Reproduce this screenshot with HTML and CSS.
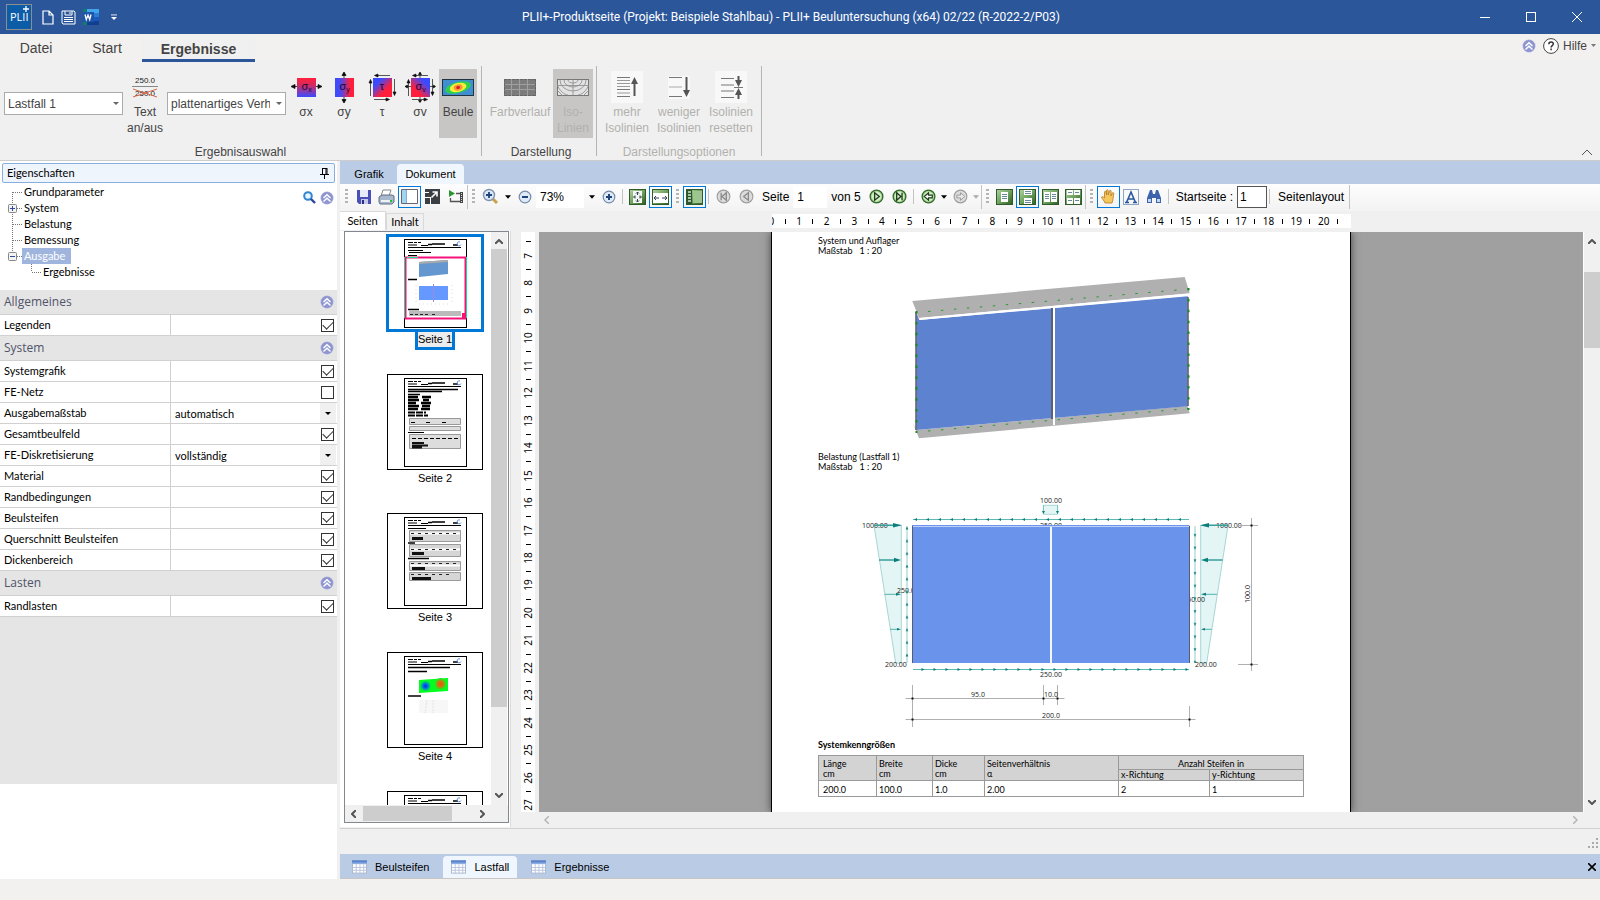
FILE: index.html
```html
<!DOCTYPE html>
<html lang="de">
<head>
<meta charset="utf-8">
<title>PLII+ Beuluntersuchung</title>
<link rel="stylesheet" href="styles.css">
</head>
<body>
<svg class="defs" aria-hidden="true">
  <defs>
    <linearGradient id="gx" x1="0" y1="0" x2="0" y2="1"><stop offset="0" stop-color="#ff1f3c"/><stop offset=".35" stop-color="#d92a5c"/><stop offset="1" stop-color="#3a4bff"/></linearGradient>
    <linearGradient id="gy" x1="0" y1="0" x2="1" y2="0"><stop offset="0" stop-color="#3a4bff"/><stop offset=".3" stop-color="#4a48ee"/><stop offset=".8" stop-color="#ff1f3c"/></linearGradient>
    <linearGradient id="gt" x1="0" y1="0" x2="1" y2="1"><stop offset=".25" stop-color="#3a4bff"/><stop offset=".65" stop-color="#ff1f3c"/></linearGradient>
    <linearGradient id="gv" x1="0" y1="1" x2="1" y2="0"><stop offset=".3" stop-color="#ff1f3c"/><stop offset=".75" stop-color="#3a4bff"/></linearGradient>
    <linearGradient id="gg" x1="0" y1="0" x2="1" y2="1"><stop offset="0" stop-color="#b5d3a4"/><stop offset=".5" stop-color="#6fa35e"/><stop offset="1" stop-color="#2c5c22"/></linearGradient>
    <linearGradient id="gb" x1="0" y1="0" x2="0" y2="1"><stop offset="0" stop-color="#3f6fc4"/><stop offset="1" stop-color="#9fbbe8"/></linearGradient>
    <radialGradient id="gc"><stop offset="0" stop-color="#8fa6dc"/><stop offset=".8" stop-color="#9290cc"/><stop offset="1" stop-color="#a5b6e2"/></radialGradient>
    <radialGradient id="hb"><stop offset="0" stop-color="#0020ff"/><stop offset=".5" stop-color="#0080d0"/><stop offset="1" stop-color="#00ff20"/></radialGradient>
    <radialGradient id="hr"><stop offset="0" stop-color="#f05010"/><stop offset=".5" stop-color="#c08010"/><stop offset="1" stop-color="#00ff20"/></radialGradient>
    <pattern id="ar" width="12" height="4" patternUnits="userSpaceOnUse" x="914" y="667"><path d="M0 2.500h12" stroke="#5fb8b3"/><path d="M8.500 1l3 1.500-3 1.500z" fill="#0b7f7c"/></pattern>
    <pattern id="al" width="12" height="4" patternUnits="userSpaceOnUse" x="914" y="517"><path d="M0 2.500h12" stroke="#5fb8b3"/><path d="M4 1L1 2.500 4 4z" fill="#0b7f7c"/></pattern>
    <pattern id="au" width="4" height="12.7" patternUnits="userSpaceOnUse" x="906" y="526"><path d="M2 0v13" stroke="#5fb8b3" stroke-width=".7"/><path d="M.6 3.500L2 .5l1.400 3z" fill="#0b7f7c"/></pattern>
    <pattern id="ad" width="4" height="12.7" patternUnits="userSpaceOnUse" x="1194" y="525"><path d="M2 0v13" stroke="#5fb8b3" stroke-width=".7"/><path d="M.6 9L2 12l1.400-3z" fill="#0b7f7c"/></pattern>
    <symbol id="chev" viewBox="0 0 14 14"><circle cx="7" cy="7" r="6.500" fill="url(#gc)"/><path d="M3.500 7L7 3.700 10.500 7M3.500 10.500L7 7.200l3.500 3.300" fill="none" stroke="#fff" stroke-width="1.300"/></symbol>
    <symbol id="down" viewBox="0 0 7 4"><path d="M0 0h7L3.500 4z" fill="currentColor"/></symbol>
    <symbol id="tab" viewBox="0 0 16 14"><rect x=".5" y=".5" width="15" height="13" fill="#fff" stroke="#a9b6cf"/><path d="M0 0h16v4H0z" fill="url(#gb)"/><path d="M1 7.500h14M1 10.500h14M4.500 4v10M8.500 4v10M12.500 4v10" stroke="#b7c4da"/></symbol>
    <symbol id="tmid" viewBox="0 0 20 16"><path d="M8.500 0v16M9 8.500h10" stroke="#777" stroke-dasharray="1 1"/></symbol>
    <symbol id="ttop" viewBox="0 0 20 16"><path d="M8.500 8v8M9 8.500h10" stroke="#777" stroke-dasharray="1 1"/></symbol>
    <symbol id="tplus" viewBox="0 0 20 16"><path d="M8.500 0v16M9 8.500h10" stroke="#777" stroke-dasharray="1 1"/><rect x="4.500" y="4.500" width="8" height="8" rx="1" fill="#f3f3f3" stroke="#888"/><path d="M6 8.500h5M8.500 6v5" stroke="#2b4ba0"/></symbol>
    <symbol id="tminus" viewBox="0 0 20 16"><path d="M8.500 0v8M9 8.500h10" stroke="#777" stroke-dasharray="1 1"/><rect x="4.500" y="4.500" width="8" height="8" rx="1" fill="#f3f3f3" stroke="#888"/><path d="M6 8.500h5" stroke="#2b4ba0"/></symbol>
    <symbol id="pg" viewBox="0 0 96 96"><rect x="17.500" y="4.500" width="62" height="88" fill="#fff" stroke="#000"/><path d="M21 7.500h13" stroke="#000" stroke-dasharray="5 1 3 1"/><path d="M21 10h9M34 10.500h7M21 12.500h53" stroke="#000"/><path d="M41 9.500h4M45 9h13M66 10h5" stroke="#000" stroke-width="1.500"/><path d="M76 10.500a2 2 0 1 1-1-2.500" transform="translate(-2 -1)" fill="none" stroke="#5b8fe0"/></symbol>
    <symbol id="ring" viewBox="0 0 16 16"><circle cx="8" cy="8" r="6.800" fill="#a8d596" stroke="#31692a" stroke-width="1.400"/><circle cx="8" cy="8" r="5" fill="#d5efcb"/></symbol>
    <symbol id="gring" viewBox="0 0 16 16"><circle cx="8" cy="8" r="6.800" fill="#dcdcdc" stroke="#9d9d9d" stroke-width="1.200"/></symbol>
    <symbol id="gsq" viewBox="0 0 17 16"><rect x=".5" y=".5" width="16" height="15" fill="url(#gg)" stroke="#2f5a29"/></symbol>
  </defs>
</svg>

<header class="titlebar">
  <div class="quick">
    <svg width="26" height="26" viewBox="0 0 26 26"><rect x=".5" y=".5" width="25" height="25" fill="#0c5ca8" stroke="#8a8f90"/><text x="4" y="17" class="logo-text">PLII</text><path d="M20 2v6M17 5h6" stroke="#fff" stroke-width="1.300"/></svg>
    <button aria-label="Neu"><svg width="12" height="15" viewBox="0 0 12 15"><path d="M1 1h6l4 4v9H1zM7 1v4h4" fill="none" stroke="#fff" stroke-width="1.200"/></svg></button>
    <button aria-label="Speichern"><svg width="15" height="15" viewBox="0 0 15 15"><path d="M1 1h12l1 1v12H2l-1-1zM4 1v4h7V1M9 2v2M3 7.500h9M3 9.500h9M3 11.500h9" fill="none" stroke="#fff"/></svg></button>
    <button aria-label="Word"><svg width="16" height="16" viewBox="0 0 16 16"><path d="M4 0h12v4H4z" fill="#41a5ee"/><path d="M0 0h4v4H0z" fill="#127c6c"/><path d="M4 4h12v4H4z" fill="#2b7cd3"/><path d="M4 8h12v4H4z" fill="#185abd"/><path d="M4 12h12v4H4z" fill="#103f91"/><path d="M0 12h4v4H0z" fill="#127c6c"/><path d="M0 3h11v10H0z" fill="#1d55ad"/><path d="M2 5.500l1.300 5L5 6l1.700 4.500 1.300-5" fill="none" stroke="#fff" stroke-width="1.300"/></svg></button>
    <button aria-label="Anpassen"><svg width="6" height="7" viewBox="0 0 7 7"><path d="M0 .5h7" stroke="#fff"/><path d="M0 3h7L3.500 6.500z" fill="#fff"/></svg></button>
  </div>
  <h1>PLII+-Produktseite (Projekt: Beispiele Stahlbau) - PLII+ Beuluntersuchung (x64) 02/22 (R-2022-2/P03)</h1>
  <div class="window-buttons">
    <button aria-label="Minimieren"><svg width="10" height="10"><path d="M0 5.500h10" stroke="#fff"/></svg></button>
    <button aria-label="Maximieren"><svg width="10" height="10"><rect x=".5" y=".5" width="9" height="9" fill="none" stroke="#fff"/></svg></button>
    <button aria-label="Schließen"><svg width="10" height="10"><path d="M0 0l10 10M10 0L0 10" stroke="#fff"/></svg></button>
  </div>
</header>

<nav class="menu">
  <button>Datei</button><button>Start</button><button class="active">Ergebnisse</button>
  <div class="help">
    <svg width="14" height="14"><use href="#chev"/></svg>
    <button><svg width="16" height="16" viewBox="0 0 16 16"><circle cx="8" cy="8" r="7.400" fill="#fff" stroke="#444"/><path d="M5.800 6.200c0-3 4.500-3 4.500-.2 0 1.500-2.200 1.700-2.200 3.400M8.100 10.600v1.600" fill="none" stroke="#333" stroke-width="1.500"/></svg>Hilfe<svg class="tri" width="5" height="3"><use href="#down"/></svg></button>
  </div>
</nav>

<section class="ribbon">
  <div class="group">
    <div class="tools">
      <span class="combo"><select aria-label="Lastfall"><option>Lastfall 1</option></select></span>
      <button class="textbtn"><svg width="32" height="32" viewBox="0 0 32 32"><text x="16" y="12" class="num">250.0</text><path d="M3 15.500h26" stroke="#888"/><text x="16" y="25" class="num">250.0</text><path d="M4 18l24 8M4 26l24-8" stroke="#d9694a"/></svg><span>Text<br>an/aus</span></button>
      <span class="combo"><select aria-label="Verhalten"><option>plattenartiges Verhalten</option></select></span>
      <button class="sig"><svg width="32" height="32" viewBox="0 0 32 32"><path d="M7 7h19v19H7z" fill="url(#gx)"/><path d="M2 15.500h5M26 15.500h5M5 13.500l-4 2 4 2zM28 13.500l4 2-4 2z" stroke="#111" stroke-width=".8"/><text x="15" y="19" class="sym">σ</text><text x="20" y="21" class="sub">x</text></svg>σx</button>
      <button class="sig"><svg width="32" height="32" viewBox="0 0 32 32"><path d="M7 7h19v19H7z" fill="url(#gy)"/><path d="M16 2v5M16 26v5M14 4.500L16 1l2 3.500zM14 28.500l2 3.500 2-3.500z" stroke="#111" stroke-width=".8"/><text x="15" y="19" class="sym">σ</text><text x="20" y="21" class="sub">y</text></svg>σy</button>
      <button class="sig"><svg width="32" height="32" viewBox="0 0 32 32"><path d="M7 7h19v19H7z" fill="url(#gt)"/><path d="M10 4.500h14M4.500 10v15M28.500 8v15M8 28.500h14M12 3L8.500 4.500 12 6zM3 12l1.500-3.500L6 12zM27 21l1.500 3.500L30 21zM20 27l3.500 1.500L20 30z" stroke="#111" stroke-width=".7"/><text x="16" y="19" class="sym">τ</text></svg>τ</button>
      <button class="sig"><svg width="32" height="32" viewBox="0 0 32 32"><path d="M7 7h19v19H7z" fill="url(#gv)"/><path d="M10 4.500h14M4.500 10v15M28.500 8v15M8 28.500h14M12 3L8.500 4.500 12 6zM3 12l1.500-3.500L6 12zM27 21l1.500 3.500L30 21zM20 27l3.500 1.500L20 30zM14.500 3.500L16 1l1.500 2.500zM14.500 29.500l1.500 2 1.500-2zM3.500 14L1 15.500 3.500 17zM29.500 14l2 1.500-2 1.500zM1 15.500h6M26 15.500h5M16 2v5M16 26v5" stroke="#111" stroke-width=".7"/><text x="15" y="19" class="sym">σ</text><text x="20" y="21" class="sub">v</text></svg>σv</button>
      <button class="sig on"><svg width="32" height="32" viewBox="0 0 32 32"><rect x=".5" y="8.500" width="31" height="16" fill="#3f8fd0" stroke="#234"/><g transform="rotate(-14 16 16)"><ellipse cx="16" cy="16.500" rx="13" ry="5.500" fill="#2fd050"/><ellipse cx="16" cy="16.500" rx="8.500" ry="4.500" fill="#f4ee3a"/><ellipse cx="16" cy="16.500" rx="4.500" ry="3" fill="#f5943a"/><ellipse cx="16" cy="16.500" rx="2" ry="1.500" fill="#e02020"/></g></svg>Beule</button>
    </div>
    <div class="caption">Ergebnisauswahl</div>
  </div>
  <div class="group">
    <div class="tools">
      <button class="wide" disabled><svg width="32" height="32" viewBox="0 0 32 32"><rect y="8" width="32" height="17" fill="#7c7c7c"/><path d="M0 13.500h32M0 18.500h32M7.500 8v17M15.500 8v17M23.500 8v17" stroke="#a0a0a0"/><path d="M0 8.500h32M0 24.500h32M.5 8v17M31.500 8v17" stroke="#666" stroke-dasharray="3 1"/></svg>Farbverlauf</button>
      <button class="on" disabled><svg width="32" height="32" viewBox="0 0 32 32"><rect x=".5" y="8.500" width="31" height="16" fill="#e2e2e2" stroke="#777"/><path d="M16 8v17M0 14.500h32M11 9a5 3 0 0 0 10 0M7 9a9 7 0 0 0 18 0M3 9a13 11 0 0 0 26 0M0 13c2 7 8 11 11 11M32 13c-2 7-8 11-11 11M0 19l6 6M32 19l-6 6" fill="none" stroke="#8a8a8a" stroke-width=".8"/></svg><span>Iso-<br>Linien</span></button>
    </div>
    <div class="caption">Darstellung</div>
  </div>
  <div class="group">
    <div class="tools spaced">
      <button disabled><svg width="32" height="32" viewBox="0 0 32 32"><path d="M0 0h32v32H0z" fill="#f8f8f8"/><path d="M6 6.500h13M6 18.500h13M6 25.500h13" stroke="#777"/><path d="M6 9.500h13M6 12.500h13M6 15.500h13M6 22h13" stroke="#999"/><path d="M23.500 10v15" stroke="#555" stroke-width="2"/><path d="M20 13l3.500-7 3.500 7z" fill="#555"/></svg><span>mehr<br>Isolinien</span></button>
      <button disabled><svg width="32" height="32" viewBox="0 0 32 32"><path d="M5 5h22v23H5z" fill="#f8f8f8"/><path d="M6 6.500h13M6 25.500h13" stroke="#777"/><path d="M6 16h13" stroke="#aaa"/><path d="M23.500 6v15" stroke="#555" stroke-width="2"/><path d="M20 19l3.500 7 3.500-7z" fill="#555"/></svg><span>weniger<br>Isolinien</span></button>
      <button disabled><svg width="32" height="32" viewBox="0 0 32 32"><path d="M0 0h32v32H0z" fill="#f8f8f8"/><path d="M6 7.500h13M6 14h13M6 20h13M6 26.500h13M19 16.500h9" stroke="#777" stroke-width="1.200"/><path d="M23.500 5v6M23.500 22v6" stroke="#555" stroke-width="2"/><path d="M20 9l3.500 7L27 9zM20 24l3.500-7 3.500 7z" fill="#555"/></svg><span>Isolinien<br>resetten</span></button>
    </div>
    <div class="caption dim">Darstellungsoptionen</div>
  </div>
  <button class="collapse" aria-label="Menüband reduzieren"><svg width="12" height="7"><path d="M1 6l5-5 5 5" fill="none" stroke="#555"/></svg></button>
</section>

<main class="work">
  <aside class="props">
    <div class="props-title"><span>Eigenschaften</span><svg width="9" height="11" viewBox="0 0 9 11"><path d="M2 .5h5M2.500 0v6M6 0v6M7 0v6M0 6.500h9M4.500 7v4" stroke="#000" fill="none"/></svg></div>
    <div class="tree">
      <ul>
        <li><svg width="20" height="16"><use href="#ttop"/></svg><span>Grundparameter</span></li>
        <li><svg width="20" height="16"><use href="#tplus"/></svg><span>System</span></li>
        <li><svg width="20" height="16"><use href="#tmid"/></svg><span>Belastung</span></li>
        <li><svg width="20" height="16"><use href="#tmid"/></svg><span>Bemessung</span></li>
        <li><svg width="20" height="16"><use href="#tminus"/></svg><span class="sel">Ausgabe</span></li>
        <li class="child"><svg width="20" height="16"><path d="M8.500 0v8M9 8.500h10" stroke="#777" stroke-dasharray="1 1"/></svg><span>Ergebnisse</span></li>
      </ul>
      <div class="tree-tools">
        <svg width="13" height="13" viewBox="0 0 13 13"><circle cx="5" cy="5" r="3.800" fill="#e8f4ff" stroke="#2f86cf" stroke-width="2"/><path d="M8 8l4 4" stroke="#27479c" stroke-width="2.400"/></svg>
        <svg width="14" height="14"><use href="#chev"/></svg>
      </div>
    </div>
    <div class="sheet">
      <div class="cat"><span>Allgemeines</span><svg width="14" height="14"><use href="#chev"/></svg></div>
      <div class="prop"><label for="p1">Legenden</label><div><input id="p1" type="checkbox" checked></div></div>
      <div class="cat"><span>System</span><svg width="14" height="14"><use href="#chev"/></svg></div>
      <div class="prop"><label for="p2">Systemgrafik</label><div><input id="p2" type="checkbox" checked></div></div>
      <div class="prop"><label for="p3">FE-Netz</label><div><input id="p3" type="checkbox"></div></div>
      <div class="prop"><label for="p4">Ausgabemaßstab</label><div class="pick"><select id="p4"><option>automatisch</option></select></div></div>
      <div class="prop"><label for="p5">Gesamtbeulfeld</label><div><input id="p5" type="checkbox" checked></div></div>
      <div class="prop"><label for="p6">FE-Diskretisierung</label><div class="pick"><select id="p6"><option>vollständig</option></select></div></div>
      <div class="prop"><label for="p7">Material</label><div><input id="p7" type="checkbox" checked></div></div>
      <div class="prop"><label for="p8">Randbedingungen</label><div><input id="p8" type="checkbox" checked></div></div>
      <div class="prop"><label for="p9">Beulsteifen</label><div><input id="p9" type="checkbox" checked></div></div>
      <div class="prop"><label for="p10">Querschnitt Beulsteifen</label><div><input id="p10" type="checkbox" checked></div></div>
      <div class="prop"><label for="p11">Dickenbereich</label><div><input id="p11" type="checkbox" checked></div></div>
      <div class="cat"><span>Lasten</span><svg width="14" height="14"><use href="#chev"/></svg></div>
      <div class="prop"><label for="p12">Randlasten</label><div><input id="p12" type="checkbox" checked></div></div>
    </div>
    <div class="blank"></div>
  </aside>

  <section class="doc">
    <div class="tabs"><button>Grafik</button><button class="active">Dokument</button></div>
    <div class="toolbar">
      <i class="grip"></i>
      <button aria-label="Speichern"><svg width="16" height="16" viewBox="0 0 16 16"><path d="M1 1h14v14H3l-2-2z" fill="#4a50b5"/><path d="M4 1h8v7H4z" fill="#e8ecfa"/><path d="M5 10h7v5H5z" fill="#c5c9e8"/><path d="M6 11h2v4H6z" fill="#2a2f80"/></svg></button>
      <button aria-label="Drucken"><svg width="17" height="16" viewBox="0 0 17 16"><path d="M5 1h8l-2 6H3z" fill="#fff" stroke="#888"/><path d="M1 8l3-2h10l2 1v6l-2 2H2l-1-2z" fill="#aab8cb" stroke="#5f6f86"/><path d="M3 11h9v2H3z" fill="#eef2f7"/><path d="M12 11h2v2h-2z" fill="#19c32a"/></svg></button>
      <button class="on" aria-label="Seitenleiste"><svg width="17" height="15" viewBox="0 0 17 15"><path d="M.5.5h16v14H.5z" fill="#fff" stroke="#667"/><path d="M1 1h4v13H1z" fill="#9fd5f0"/><path d="M5.500 1v13" stroke="#8ac"/></svg></button>
      <button aria-label="Vollbild"><svg width="15" height="15" viewBox="0 0 15 15"><path d="M0 0h15v15H0z" fill="#3b3f44"/><path d="M7.500 3H12v4.500M12 3L6.500 8.500" fill="none" stroke="#fff" stroke-width="1.600"/><path d="M0 8h6v7H0z" fill="#fff"/><path d="M0 9h5v6H0z" fill="#3b3f44"/><path d="M0 3.500h4" stroke="#fff"/></svg></button>
      <button aria-label="Präsentation"><svg width="16" height="13" viewBox="0 0 16 13"><path d="M1 0l6 3.500L1 7z" fill="#2b9430"/><path d="M8 3.500h6v8H2.500V8" fill="none" stroke="#555" stroke-width="1.300"/><path d="M12 2v11h3V2z" fill="#444"/><path d="M13.500 3v9" stroke="#ddd" stroke-dasharray="1 1"/></svg></button>
      <i class="sep end"></i><i class="grip"></i>
      <button aria-label="Zoom"><svg width="17" height="17" viewBox="0 0 17 17"><path d="M10 10l5 5" stroke="#c9a24c" stroke-width="3"/><circle cx="7" cy="7" r="5.500" fill="#dbe8f7" stroke="#7f93ae" stroke-width="1.400"/><path d="M4 7h6M7 4v6" stroke="#1f437c" stroke-width="1.800"/></svg></button>
      <button class="drop" aria-label="Zoommenü"><svg width="6" height="4"><use href="#down"/></svg></button>
      <button aria-label="Verkleinern"><svg width="14" height="14" viewBox="0 0 14 14"><circle cx="7" cy="7" r="5.800" fill="#dfeaf7" stroke="#7489a8" stroke-width="1.200"/><path d="M4 7h6" stroke="#1f437c" stroke-width="2"/></svg></button>
      <input class="zoomval" value="73%" aria-label="Zoomfaktor">
      <button class="drop" aria-label="Zoomwerte"><svg width="6" height="4"><use href="#down"/></svg></button>
      <button aria-label="Vergrößern"><svg width="14" height="14" viewBox="0 0 14 14"><circle cx="7" cy="7" r="5.800" fill="#dfeaf7" stroke="#7489a8" stroke-width="1.200"/><path d="M4 7h6M7 4v6" stroke="#1f437c" stroke-width="2"/></svg></button>
      <i class="sep"></i>
      <button aria-label="Ganze Seite"><svg width="17" height="16" viewBox="0 0 17 16"><use href="#gsq"/><path d="M4 2h9v12H4z" fill="#f4f8f2"/><path d="M8.500 3v3M8.500 10v3M5 8h2M10 8h2M7 4.500L8.500 3 10 4.500M7 11.500L8.500 13l1.500-1.500M6 6.500L4.500 8 6 9.500M11 6.500L12.500 8 11 9.500" fill="none" stroke="#345"/></svg></button>
      <button class="on" aria-label="Seitenbreite"><svg width="17" height="16" viewBox="0 0 17 16"><use href="#gsq"/><path d="M1 4h15v10H1z" fill="#fff"/><path d="M2 9h5M10 9h5M4 7L2 9l2 2M13 7l2 2-2 2" fill="none" stroke="#345"/></svg></button>
      <i class="grip"></i>
      <button class="on" aria-label="Miniaturen"><svg width="17" height="16" viewBox="0 0 17 16"><use href="#gsq"/><path d="M1 1h5v14H1z" fill="#2c5531"/><path d="M2 3h3M2 6h3M2 9h3M2 12h3" stroke="#cfe8c5" stroke-width="1.500"/><path d="M7 2h9v12H7z" fill="#9cc590"/></svg></button>
      <i class="sep"></i>
      <button aria-label="Erste Seite"><svg width="15" height="15" viewBox="0 0 16 16"><use href="#gring"/><path d="M5.500 4v8M11 4L6.500 8l4.500 4z" fill="none" stroke="#8a8a8a" stroke-width="1.400"/></svg></button>
      <button aria-label="Vorherige Seite"><svg width="15" height="15" viewBox="0 0 16 16"><use href="#gring"/><path d="M10 4L5 8l5 4z" fill="none" stroke="#8a8a8a" stroke-width="1.400"/></svg></button>
      <label for="page" class="lbl">Seite</label><input id="page" class="pageno" value="1"><span class="lbl">von 5</span>
      <button aria-label="Nächste Seite"><svg width="15" height="15" viewBox="0 0 16 16"><use href="#ring"/><path d="M6 4l5 4-5 4z" fill="none" stroke="#1f3c1a" stroke-width="1.400"/></svg></button>
      <button aria-label="Letzte Seite"><svg width="15" height="15" viewBox="0 0 16 16"><use href="#ring"/><path d="M5 4l4.500 4L5 12zM10.700 4v8" fill="none" stroke="#1f3c1a" stroke-width="1.400"/></svg></button>
      <i class="sep"></i>
      <button aria-label="Zurück"><svg width="15" height="15" viewBox="0 0 16 16"><use href="#ring"/><path d="M3.500 8L8 4v2.500h4v3H8V12z" fill="#fff" stroke="#1f3c1a" stroke-width="1.300"/></svg></button>
      <button class="drop slim" aria-label="Verlauf"><svg width="6" height="4"><use href="#down"/></svg></button>
      <button aria-label="Vor"><svg width="15" height="15" viewBox="0 0 16 16"><use href="#gring"/><path d="M12.500 8L8 4v2.500H4v3h4V12z" fill="#e8e8e8" stroke="#999"/></svg></button>
      <button class="drop slim off" aria-label="Verlauf vor"><svg width="6" height="4"><use href="#down"/></svg></button>
      <i class="sep end"></i><i class="grip"></i>
      <button aria-label="Einzelseite"><svg width="17" height="16"><use href="#gsq"/><path d="M5 3h7v10H5z" fill="#fff"/><path d="M6 5.500h5M6 7.500h5M6 9.500h5" stroke="#6a8a9a"/></svg></button>
      <button class="on" aria-label="Fortlaufend"><svg width="17" height="16"><use href="#gsq"/><path d="M5 1h8v5H5zM5 9h8v6H5z" fill="#fff"/><path d="M6 2.500h6M6 4.500h6M6 11.500h6M6 13.500h6" stroke="#6a8a9a"/></svg></button>
      <button aria-label="Doppelseite"><svg width="17" height="16"><use href="#gsq"/><path d="M2 3h6v10H2zM9 3h6v10H9z" fill="#fff"/><path d="M3 5.500h4M3 7.500h4M3 9.500h4M10 5.500h4M10 7.500h4M10 9.500h4" stroke="#6a8a9a"/></svg></button>
      <button aria-label="Doppelseite fortlaufend"><svg width="17" height="16"><use href="#gsq"/><path d="M2 1h6v5H2zM9 1h6v5H9zM2 9h6v6H2zM9 9h6v6H9z" fill="#fff"/><path d="M3 3.500h4M10 3.500h4M3 11.500h4M10 11.500h4" stroke="#6a8a9a"/></svg></button>
      <i class="sep end"></i><i class="grip"></i>
      <button class="on" aria-label="Hand"><svg width="15" height="15" viewBox="0 0 15 15"><path d="M4 14c-1-3-3-4-3.500-6 .8-.8 2 0 3 1V3c0-1 1.600-1 1.700 0l.3 3V1.500c0-1 1.700-1 1.700 0V6L8.500 2c.2-1 1.700-.8 1.600.2L10 7l1.300-3c.4-.8 1.700-.3 1.500.6-.8 3.400-.5 6.400-1.800 9.400z" fill="#f6c65f" stroke="#b47b25" stroke-width=".8"/></svg></button>
      <button aria-label="Textauswahl"><svg width="16" height="16"><rect x=".5" y=".5" width="15" height="15" fill="none" stroke="#23508f" stroke-dasharray="1 1"/><path d="M3.500 13.500L8 3l4.500 10.500M5 10h6M2 13.500h4M10 13.500h4" fill="none" stroke="#2b57a0" stroke-width="1.600"/></svg></button>
      <button aria-label="Suchen"><svg width="16" height="14"><path d="M4 0h2l1 4h2l1-4h2l3 8v5h-5V8H6v5H1V8z" fill="#3e63ad"/><path d="M2 9h3v3H2zM11 9h3v3h-3z" fill="#c5d6f2"/></svg></button>
      <i class="sep"></i>
      <label for="start" class="lbl">Startseite :</label><input id="start" class="startno" value="1">
      <i class="sep"></i>
      <button class="txt">Seitenlayout</button><i class="sep end"></i>
    </div>

    <div class="viewer">
      <div class="thumbs">
        <div class="minitabs"><button class="active">Seiten</button><button>Inhalt</button></div>
        <div class="thumbpane">
          <div class="thumblist">
            <div class="list">
              <figure class="sel"><svg width="96" height="96" viewBox="0 0 96 96"><use href="#pg"/><path d="M21 15.500h15M22 17.500h22M21 20.500h9" stroke="#000"/><path d="M32 27l29-2v14l-29 3z" fill="#6497cf"/><path d="M32 28l29-2" stroke="#aaa" stroke-width="2"/><path d="M32 51h29v14H32z" fill="#6699ff"/><path d="M46.500 49v18" stroke="#9a8ae0"/><path d="M29 50v18M65 50v18M32 69h29" stroke="#ddd" stroke-dasharray="1 3"/><path d="M21 44.500h9M21 74.500h11" stroke="#000" stroke-width="1.500"/><path d="M22 76h52v5H22z" fill="#bbb"/><path d="M23 79.500h20M45 79.500h4" stroke="#222" stroke-dasharray="3 2"/><path d="M18.500 22.500h60v61h-60z" fill="none" stroke="#f5127a" stroke-width="2"/><path d="M17.500 22v61M79.500 22v61M20 22.500h11" stroke="#18e08a"/><path d="M75 78h4v5h-4z" fill="#f5127a"/></svg><figcaption>Seite 1</figcaption></figure>
              <figure><svg width="96" height="96" viewBox="0 0 96 96"><use href="#pg"/><path d="M21 15.500h50M21 17.500h34M21 20.500h12" stroke="#000" stroke-width="1.500"/><path d="M21 23h10M35 23h9M21 26h11M36 26h6M21 29h8M34 29h10M21 32h11M35 32h8M21 35h10M34 35h9" stroke="#000" stroke-width="2.400"/><path d="M21 38.500h18M21 41.500h20" stroke="#000" stroke-width="2" stroke-dasharray="7 1"/><path d="M22.500 44.500h51v6h-51zM22.500 52.500h51v4h-51zM22.500 60.500h51v14h-51z" fill="#ddd" stroke="#999"/><path d="M24 48.500h4M39 48.500h4M55 48.500h5M25 64.500h48" stroke="#000" stroke-dasharray="4 2"/><path d="M21 58.500h16" stroke="#000"/><path d="M25 69h12M25 71.500h16M25 73.500h10" stroke="#111" stroke-width="2"/></svg><figcaption>Seite 2</figcaption></figure>
              <figure><svg width="96" height="96" viewBox="0 0 96 96"><use href="#pg"/><path d="M21 15.500h18" stroke="#000"/><path d="M22.500 17.500h51v11h-51zM22.500 31.500h51v12h-51zM22.500 48.500h51v9h-51zM22.500 59.500h51v8h-51z" fill="#d6d6d6" stroke="#999"/><path d="M23 20.500h50M23 36.500h50M23 52.500h50" stroke="#fff" stroke-width="2"/><path d="M24 20.500h49M24 36.500h48M24 50.500h45M24 61.500h40" stroke="#222" stroke-dasharray="3 4"/><path d="M25 25.500h11M25 40.500h12M25 55.500h13M25 65.500h19" stroke="#111" stroke-width="3"/><path d="M21 45.500h21M21 30h7" stroke="#000" stroke-width="1.500"/></svg><figcaption>Seite 3</figcaption></figure>
              <figure><svg width="96" height="96" viewBox="0 0 96 96"><use href="#pg"/><path d="M21 15.500h42M21 19.500h19M21 44h13" stroke="#000" stroke-width="1.500"/><path d="M32 28l29-2v13l-29 2z" fill="#00ff20"/><circle cx="38.500" cy="34" r="5.500" fill="url(#hb)"/><circle cx="53.500" cy="32" r="6" fill="url(#hr)"/><path d="M32 48h29v13H32z" fill="#f7f7f7"/><path d="M40 48l-2 13M46 48v13" stroke="#e2e2e2" stroke-dasharray="2 1"/></svg><figcaption>Seite 4</figcaption></figure>
              <figure><svg width="96" height="96" viewBox="0 0 96 96"><use href="#pg"/></svg></figure>
            </div>
            <div class="vbar"><svg width="8" height="5"><path d="M0 5l4-4 4 4" fill="none" stroke="#555" stroke-width="2"/></svg><i class="thumb long"></i><svg width="8" height="5"><path d="M0 0l4 4 4-4" fill="none" stroke="#555" stroke-width="2"/></svg></div>
          </div>
          <div class="hbar small"><svg width="5" height="8"><path d="M5 0L1 4l4 4" fill="none" stroke="#555" stroke-width="2"/></svg><i class="hthumb"></i><svg width="5" height="8"><path d="M0 0l4 4-4 4" fill="none" stroke="#555" stroke-width="2"/></svg></div>
        </div>
      </div>

      <div class="canvas">
        <div class="hruler"><div class="hscale">
          <b>0</b><i></i><b>1</b><i></i><b>2</b><i></i><b>3</b><i></i><b>4</b><i></i><b>5</b><i></i><b>6</b><i></i><b>7</b><i></i><b>8</b><i></i><b>9</b><i></i><b>10</b><i></i><b>11</b><i></i><b>12</b><i></i><b>13</b><i></i><b>14</b><i></i><b>15</b><i></i><b>16</b><i></i><b>17</b><i></i><b>18</b><i></i><b>19</b><i></i><b>20</b><i></i>
        </div></div>
        <div class="stage">
          <div class="vruler">
            <i></i><b>7</b><i></i><b>8</b><i></i><b>9</b><i></i><b>10</b><i></i><b>11</b><i></i><b>12</b><i></i><b>13</b><i></i><b>14</b><i></i><b>15</b><i></i><b>16</b><i></i><b>17</b><i></i><b>18</b><i></i><b>19</b><i></i><b>20</b><i></i><b>21</b><i></i><b>22</b><i></i><b>23</b><i></i><b>24</b><i></i><b>25</b><i></i><b>26</b><i></i><b>27</b>
          </div>
          <div class="desk">
            <article class="paper">
              <p>System und Auflager<br>Maßstab &nbsp; 1 : 20</p>
              <svg width="578" height="196" viewBox="773 256 578 196" role="img" aria-label="Systemgrafik">
                <path d="M913.300 301l272.400-24 5 16.300L920 318z" fill="#b0b0b0"/>
                <path d="M913.300 421.700l4 8.300 271.400-24 2 7.300L920 438.300z" fill="#b0b0b0"/>
                <path d="M917.300 312l3 8 268.400-23.700v110L917.300 430z" fill="#5d83d0"/>
                <path d="M920 319l270.700-24.500" stroke="#fff" stroke-width="2"/>
                <path d="M917 312v118M1189 297v109" stroke="#5a5a66" stroke-width="1.500"/>
                <path d="M1053 308v111" stroke="#5b6078" stroke-width="2"/><path d="M1055 308v117" stroke="#fff" stroke-width="2"/>
                <path d="M929 311.500l261-22.500M929 431l261-22.500" stroke="#2a9a30" stroke-dasharray="2.500 10.500"/>
                <path d="M917.500 311v122M1189.500 288v122" stroke="#158c1c" stroke-width="2" stroke-dasharray="2.500 8.400"/>
              </svg>
              <p>Belastung (Lastfall 1)<br>Maßstab &nbsp; 1 : 20</p>
              <svg width="578" height="266" viewBox="773 472 578 266" role="img" aria-label="Belastung" class="loads">
                <path d="M875 525.300h27.300V663h-5.600zM1229 525.300h-27.300V663h6zM1044.300 505.300h14.400v9h-14.400z" fill="#e4f5f5" stroke="#a9d6d4"/>
                <path d="M1044.500 505v7M1058.500 505v7" stroke="#7fc4c0"/><path d="M1043 511h3l-1.500 3zM1057 511h3l-1.500 3z" fill="#0b7f7c"/>
                <text x="863" y="528" class="s">1000.00</text><text x="1217" y="528" class="s">1000.00</text>
                <text x="898" y="593" class="s">250.00</text><text x="1206" y="602" class="e">250.00</text>
                <text x="1052" y="528">250.00</text>
                <path d="M875 525.300h22M1229 525.300h-22M880 560h18M1223.700 560h-18" stroke="#3a9f9b" stroke-width="1.500"/>
                <path d="M885.500 594.300h14M1218 594.300h-14M891 629.300h9M1212.700 629.300h-9" stroke="#4fb3ae"/>
                <path d="M894 523l9 2.300-9 2.300zM895 557.800l7 2.200-7 2.200zM897 592.800l5 1.500-5 1.500zM898 628l4 1.300-4 1.300zM1210 523l-9 2.300 9 2.300zM1209 557.800l-7 2.200 7 2.200zM1207 592.800l-5 1.500 5 1.500zM1206 628l-4 1.300 4 1.300z" fill="#0b7f7c"/>
                <path d="M914 517h276v4H914z" fill="url(#al)"/><path d="M914 667h276v4H914z" fill="url(#ar)"/>
                <path d="M906 526h4v137h-4z" fill="url(#au)"/><path d="M1194 526h4v137h-4z" fill="url(#ad)"/>
                <path d="M913 525h277.500v138H913z" fill="#6a93eb"/><path d="M913.500 526v137M1190.500 526v137" stroke="#555b78"/><path d="M1052 526v137" stroke="#f4f6ff" stroke-width="2"/><path d="M914 526.500h276" stroke="#bcd0fa"/>
                <text x="1052" y="503">100.00</text><text x="1052" y="677">250.00</text>
                <text x="886" y="667" class="s">200.00</text><text x="1196" y="667" class="s">200.00</text>
                <path d="M906.500 698.500h159M906.500 719.500h290M913.500 685v42M1044.500 685v20M1058.500 685v20M1190.500 706v21M1252.500 518v153M1239 525.500h20M1239 664.500h20" stroke="#b0b0b0" fill="none"/>
                <path d="M912.500 697.500h2v2h-2zM1043.500 697.500h2v2h-2zM1057.500 697.500h2v2h-2zM912.500 718.500h2v2h-2zM1189.500 718.500h2v2h-2zM1251.500 524.500h2v2h-2zM1251.500 663.500h2v2h-2z" fill="#111"/>
                <text x="979" y="697">95.0</text><text x="1052" y="697">10.0</text><text x="1052" y="718">200.0</text>
                <text x="1251" y="594" transform="rotate(-90 1251 594)">100.0</text>
              </svg>
              <h2>Systemkenngrößen</h2>
              <table>
                <colgroup><col class="c1"><col class="c2"><col class="c3"><col class="c4"><col class="c5"><col class="c6"></colgroup>
                <thead>
                  <tr class="r1"><th rowspan="2">Länge<br>cm</th><th rowspan="2">Breite<br>cm</th><th rowspan="2">Dicke<br>cm</th><th rowspan="2">Seitenverhältnis<br>α</th><th colspan="2" class="mid">Anzahl Steifen in</th></tr>
                  <tr class="r2"><th>x-Richtung</th><th>y-Richtung</th></tr>
                </thead>
                <tbody><tr class="r3"><td>200.0</td><td>100.0</td><td>1.0</td><td>2.00</td><td>2</td><td>1</td></tr></tbody>
              </table>
            </article>
          </div>
          <div class="vbar main"><svg width="8" height="5"><path d="M0 5l4-4 4 4" fill="none" stroke="#555" stroke-width="2"/></svg><i class="thumb short"></i><svg width="8" height="5"><path d="M0 0l4 4 4-4" fill="none" stroke="#555" stroke-width="2"/></svg></div>
        </div>
        <div class="hbar big"><svg width="5" height="8"><path d="M5 0L1 4l4 4" fill="none" stroke="#b5b5b5" stroke-width="1.500"/></svg><svg width="5" height="8"><path d="M0 0l4 4-4 4" fill="none" stroke="#b5b5b5" stroke-width="1.500"/></svg></div>
      </div>
    </div>

    <div class="gap"><svg width="10" height="10"><path d="M8 0h2v2H8zM4 4h2v2H4zM8 4h2v2H8zM0 8h2v2H0zM4 8h2v2H4zM8 8h2v2H8z" fill="#aaa"/></svg></div>
    <div class="bottomtabs">
      <button><svg width="15" height="14"><use href="#tab"/></svg>Beulsteifen</button>
      <button class="active"><svg width="15" height="14"><use href="#tab"/></svg>Lastfall</button>
      <button><svg width="15" height="14"><use href="#tab"/></svg>Ergebnisse</button>
      <button class="close" aria-label="Schließen"><svg width="8" height="8"><path d="M0 0l8 8M8 0L0 8" stroke="#000" stroke-width="1.600"/></svg></button>
    </div>
  </section>
</main>
<footer class="status"></footer>
</body>
</html>
```

FILE: styles.css
```css
* { box-sizing: border-box; }
body { margin: 0; height: 100vh; display: flex; flex-direction: column; overflow: hidden; background: #f0f0f0; color: #000; font: 11px/16px Lato, "Liberation Sans", sans-serif; }
button { font: inherit; color: inherit; border: 0; background: none; padding: 0; margin: 0; }
input, select { font: inherit; color: inherit; margin: 0; border-radius: 0; }
ul, figure, p, h1, h2 { margin: 0; padding: 0; }
svg { display: block; flex: none; }
.defs { position: absolute; width: 0; height: 0; }

.titlebar { flex: none; height: 34px; display: grid; grid-template-columns: 1fr auto 1fr; align-items: center; background: #2b579a; color: #fff; }
.titlebar h1 { font: 12px/16px Roboto, "Noto Sans", sans-serif; padding-right: 18px; }
.quick { display: flex; align-items: center; padding-left: 6px; }
.quick button { margin-left: 7px; }
.quick button:first-of-type { margin-left: 10px; }
.quick button:last-child { margin-left: 12px; }
.logo-text { font: 11px "Open Sans", sans-serif; fill: #fff; }
.window-buttons { display: flex; justify-content: flex-end; }
.window-buttons button { width: 46px; height: 34px; display: grid; place-items: center; }

.menu { flex: none; height: 28px; display: flex; background: #f3f1ef; color: #444; font: 14px/28px "Liberation Sans", sans-serif; }
.menu > button { width: 72px; height: 28px; }
.menu > button + button { width: 70px; }
.menu > .active { width: 113px; font-weight: bold; border-bottom: 3px solid #2b579a; background: #f0f0f0; padding-top: 1px; }
.help { margin-left: auto; display: flex; align-items: center; gap: 7px; padding: 0 4px 5px 0; font-size: 12px; }
.help button { display: flex; align-items: center; gap: 4px; line-height: 16px; }
.tri { color: #777; }

.ribbon { flex: none; height: 99px; display: flex; padding: 4px 10px 4px 4px; border-bottom: 1px solid #cfcdcb; font: 12px/16px "Liberation Sans", sans-serif; color: #444; }
.group { display: flex; flex-direction: column; justify-content: space-between; padding-right: 4px; border-right: 1px solid #b5b5b5; }
.group + .group { padding-left: 7px; padding-right: 3px; }
.group + .group + .group { padding: 0 4px; }
.tools { display: flex; padding-top: 3px; }
.tools button { width: 38px; height: 69px; padding-top: 2px; display: flex; flex-direction: column; align-items: center; justify-content: flex-start; white-space: nowrap; text-align: center; }
.tools button svg { margin-bottom: 1px; }
.tools .on { background: #c8c6c4; }
.tools button:disabled { color: #b2b0ae; }
.tools .wide { width: 62px; margin-right: 2px; }
.group:nth-child(2) .on { width: 40px; }
.tools .textbtn { width: 44px; }
.tools .combo + .sig { margin-left: 1px; }
.spaced button { width: 52px; }
.combo { position: relative; width: 119px; height: 23px; margin-top: 23px; }
.combo select { appearance: none; width: 100%; height: 23px; border: 1px solid #ababab; background: #fff; padding: 0 15px 0 3px; overflow: hidden; }
.combo::after { content: ""; position: absolute; right: 4px; top: 10px; border: 3px solid transparent; border-top-color: #666; border-bottom: 0; }
.caption { text-align: center; line-height: 16px; margin-bottom: -4px; }
.dim { color: #b2b0ae; }
.collapse { margin: auto -3px 0 auto; }
.num { font: 8px "Liberation Sans"; text-anchor: middle; fill: #222; }
.sym { font: 11px "Liberation Sans"; text-anchor: middle; fill: #200830; }
.sub { font: 7px "Liberation Sans"; text-anchor: middle; fill: #200830; }

.work { flex: 1; min-height: 0; display: flex; }
.props { width: 337px; flex: none; margin-right: 3px; background: #fff; display: flex; flex-direction: column; }
.props-title { flex: none; margin: 2px 2px 0; height: 20px; display: flex; justify-content: space-between; align-items: center; padding: 0 5px 0 4px; border: 1px solid #88aee0; border-radius: 2px; background: #eef5fd; }
.tree { flex: none; height: 107px; display: flex; justify-content: space-between; padding: 1px 3px 0 4px; }
.tree ul { list-style: none; }
.tree li { display: flex; height: 16px; }
.tree .child { padding-left: 19px; }
.tree svg + span { padding: 0 6px 0 0; }
.tree .sel { background: #9fb5dd; color: #fff; padding: 0 6px 0 2px; margin-left: -2px; }
.tree-tools { display: flex; gap: 4px; padding-top: 7px; }
.sheet { flex: none; background: #fff; }
.cat { height: 25px; display: flex; align-items: center; justify-content: space-between; padding: 0 3px 0 4px; background: #e5e5e5; border-bottom: 1px solid #d0d0d0; color: #505468; font: 12px/16px "Open Sans", sans-serif; }
.prop { height: 21px; display: grid; grid-template-columns: 171px 1fr; border-bottom: 1px solid #d0d0d0; line-height: 20px; }
.prop label { padding-left: 4px; border-right: 1px solid #d0d0d0; }
.prop > div { display: flex; align-items: center; justify-content: flex-end; padding-right: 3px; }
.prop input { appearance: none; width: 13px; height: 13px; border: 1px solid #333; background: #fff; }
.prop input:checked::after { content: ""; display: block; width: 9px; height: 5px; margin: 1px 0 0 1px; border: solid #333; border-width: 0 0 1px 1px; transform: rotate(-45deg); }
.prop .pick { padding: 0; position: relative; }
.pick select { appearance: none; width: 100%; height: 20px; border: 0; padding: 1px 20px 0 4px; background: linear-gradient(#f0f0f0, #f0f0f0) right 1px top 0 / 16px 100% no-repeat #fff; }
.pick::after { content: ""; position: absolute; right: 6px; top: 9px; border: 3px solid transparent; border-top-color: #000; border-bottom: 0; }
.blank { flex: none; height: 167px; background: #e5e5e5; }

.doc { flex: 1; min-width: 0; display: flex; flex-direction: column; }
.tabs { flex: none; height: 23px; display: flex; align-items: flex-end; background: #bacce5; padding-left: 1px; font: 11px/16px "Liberation Sans", sans-serif; }
.tabs button { width: 56px; height: 20px; }
.tabs .active { width: 67px; background: #f0f6fd; border-radius: 4px 4px 0 0; }
.toolbar { flex: none; height: 27px; display: flex; align-items: center; padding: 0 0 2px 1px; background: linear-gradient(#fdfdfd, #f3f3f3); overflow: hidden; font: 12px/16px "Liberation Sans", sans-serif; }
.toolbar button { width: 23px; height: 22px; flex: none; display: grid; place-items: center; }
.toolbar .on { border: 1px solid #0078d7; }
.toolbar .drop { width: 11px; }
.toolbar .slim { width: 9px; }
.toolbar .off { color: #aaa; }
.toolbar .txt { width: 76px; }
.toolbar input { height: 22px; border: 0; background: #fff; padding: 0 4px; flex: none; }
.zoomval { width: 48px; margin-right: 2px; }
.pageno { width: 34px; }
.toolbar .startno { width: 30px; border: 1px solid #555; padding: 0 2px; }
.lbl { padding: 0 4px; white-space: nowrap; flex: none; }
.grip { flex: none; width: 3px; height: 15px; margin: 0 4px; background: repeating-linear-gradient(#b5b5b5 0 2px, transparent 2px 4px); }
.sep { flex: none; width: 1px; height: 15px; margin: 0 3px 0 2px; background: #c4c4c4; }
.sep.end { height: 24px; margin: 0; }

.viewer { flex: 1; min-height: 0; display: flex; border-bottom: 1px solid #d0d0d0; }
.thumbs { width: 171px; flex: none; display: flex; flex-direction: column; }
.minitabs { flex: none; display: flex; align-items: flex-end; height: 19px; }
.minitabs button { width: 38px; height: 17px; border: 1px solid #d9d9d9; border-bottom: 0; }
.minitabs .active { width: 46px; height: 19px; background: #fff; border-left: 0; }
.thumbpane { flex: 1; min-height: 0; margin: 1px 0 1px; padding: 0 1px 4px 4px; border-right: 1px solid #dcdcdc; background: #fff; display: flex; flex-direction: column; }
.thumblist { flex: 1; min-height: 0; display: flex; border: 1px solid #828790; border-bottom: 0; }
.list { flex: 1; overflow: hidden; padding: 3px 0 0 42px; }
.list figure { width: 96px; height: 139px; text-align: center; }
.list figure > svg { outline: 1px solid #000; outline-offset: -1px; }
.list figcaption { display: inline-block; font: 11px/16px "Liberation Sans", sans-serif; }
.list .sel > svg { outline: 3px solid #0078d7; outline-offset: -2px; }
.list .sel figcaption { border: 3px solid #0078d7; border-top: 0; background: #ededed; line-height: 15px; }
.vbar { width: 16px; flex: none; display: flex; flex-direction: column; align-items: center; padding: 7px 0; background: #f0f0f0; }
.thumblist .vbar { width: 17px; border-right: 1px solid #fff; }
.thumb { width: 16px; background: #cdcdcd; margin-top: 5px; }
.long { height: 458px; margin-bottom: auto; }
.short { height: 76px; margin: 28px 0 auto; }
.hbar { flex: none; display: flex; align-items: center; background: #f0f0f0; justify-content: space-between; }
.small { height: 18px; padding: 0 23px 0 6px; border: solid #828790; border-width: 0 1px 1px; }
.hthumb { width: 89px; height: 15px; background: #cdcdcd; margin: 0 auto 0 7px; }
.big { height: 16px; padding: 0 22px 0 33px; }
.canvas { flex: 1; min-width: 0; display: flex; flex-direction: column; }
.hruler { flex: none; height: 14px; width: 579px; margin: 3px 0 4px calc(50% - 284px); background: #fff; overflow: hidden; }
.hscale { width: 580px; margin-left: -7px; display: grid; grid-template-columns: repeat(42, 1fr); }
.hscale > *, .vruler > * { display: grid; place-items: center; font: 10px/14px "Noto Sans", sans-serif; }
.hscale i::after { content: ""; width: 1px; height: 5px; background: #000; }
.stage { flex: 1; min-height: 0; display: flex; }
.vruler { width: 14px; margin: 0 4px 0 10px; padding-top: 3px; flex: none; background: #fff; display: grid; grid-template-rows: repeat(42, 1fr); overflow: hidden; }
.vruler > * { min-height: 0; }
.vruler b { writing-mode: vertical-rl; transform: rotate(180deg); }
.vruler i::after { content: ""; width: 5px; height: 1px; background: #000; }
.desk { flex: 1; min-width: 0; overflow: hidden; background: #a0a0a0; }
.paper { width: 580px; min-height: 100%; margin: 0 auto; border: solid #000; border-width: 0 1px; background: #fff; padding-top: 4px; font: 9px/10px Lato, "Open Sans", sans-serif; box-shadow: 0 0 8px #444; }
.paper p, .paper h2 { padding-left: 46px; }
.paper h2 { font: bold 9px/14px Lato, sans-serif; }
.loads text { font: 7px "Open Sans", sans-serif; text-anchor: middle; fill: #222; }
.loads .s { text-anchor: start; }
.loads .e { text-anchor: end; }
.paper table { border-collapse: collapse; table-layout: fixed; width: 486px; margin: 3px 0 0 46px; }
.paper th, .paper td { border: 1px solid #999; padding: 0 0 0 4px; font-weight: normal; text-align: left; line-height: 10px; }
.paper td { padding-top: 2px; }
.paper tr > :nth-child(n+2), .paper .r2 th { padding-left: 2px; }
.paper th { background: #d3d3d3; }
.paper th[rowspan] { padding-top: 2px; }
.paper tr > th.mid { text-align: center; padding: 2px 0 0; }
.r1 { height: 14px; } .r2 { height: 11px; } .r3 { height: 16px; }
.c1 { width: 58px; } .c2 { width: 56px; } .c3 { width: 52px; } .c4 { width: 134px; } .c5 { width: 91px; }
.main { border-left: 1px solid #fff; width: 17px; }

.gap { flex: none; height: 25px; display: flex; justify-content: flex-end; align-items: flex-end; padding: 0 2px 6px; }
.bottomtabs { flex: none; height: 25px; display: flex; align-items: flex-end; gap: 6px; background: #bacce5; border-bottom: 1px solid #c8c6c4; padding: 0 4px 0 4px; font: 11px/16px "Liberation Sans", sans-serif; }
.bottomtabs button { height: 22px; display: flex; align-items: center; gap: 8px; padding: 0 8px; }
.bottomtabs .active { background: #f0f6fd; border-radius: 4px 4px 0 0; }
.bottomtabs .close { margin-left: auto; padding: 0; }
.status { flex: none; height: 21px; background: #f2f1f0; }
```
